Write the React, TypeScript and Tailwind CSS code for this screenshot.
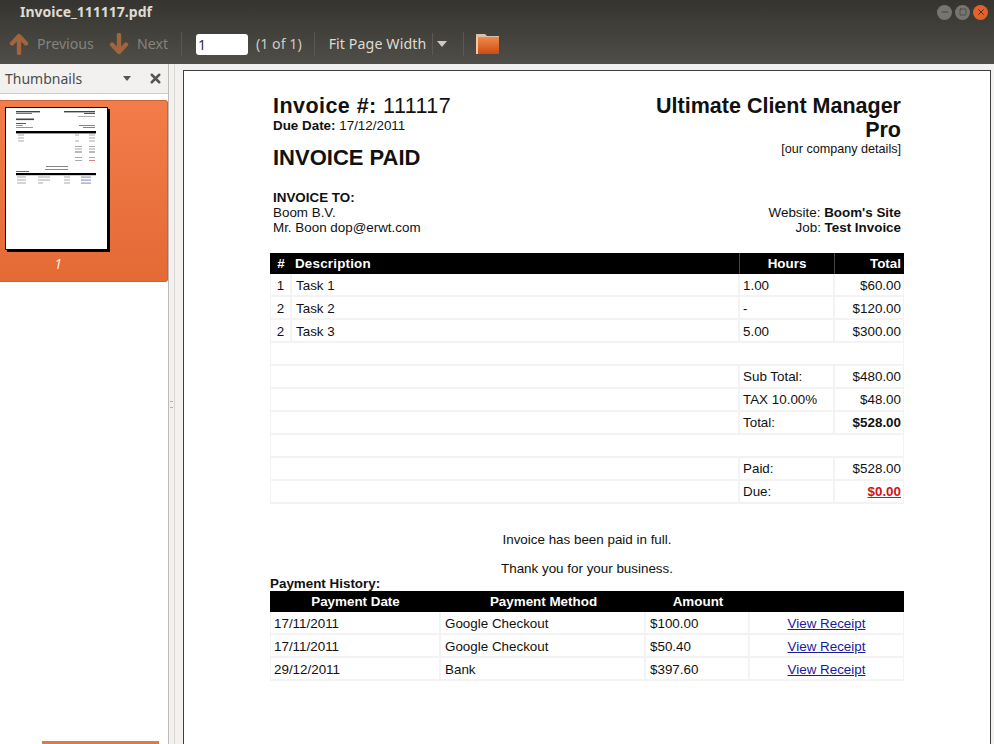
import * as React from 'react'
import { X, Minus, Square } from 'lucide-react'

type Row = { no?: string; desc?: string; mid?: string; total?: string; bold?: boolean; due?: boolean; blank?: boolean; merged?: boolean }

const rows: Row[] = [
  { no: '1', desc: 'Task 1', mid: '1.00', total: '$60.00' },
  { no: '2', desc: 'Task 2', mid: '-', total: '$120.00' },
  { no: '2', desc: 'Task 3', mid: '5.00', total: '$300.00' },
  { blank: true },
  { merged: true, mid: 'Sub Total:', total: '$480.00' },
  { merged: true, mid: 'TAX 10.00%', total: '$48.00' },
  { merged: true, mid: 'Total:', total: '$528.00', bold: true },
  { blank: true },
  { merged: true, mid: 'Paid:', total: '$528.00' },
  { merged: true, mid: 'Due:', total: '$0.00', due: true },
]

const payments = [
  ['17/11/2011', 'Google Checkout', '$100.00'],
  ['17/11/2011', 'Google Checkout', '$50.40'],
  ['29/12/2011', 'Bank', '$397.60'],
]

function Thumb() {
  // tiny picture of the page, same layout as the big one
  const lines = [
    [11, 4, 24, 1.4, '#444'], [59, 4, 31, 1.4, '#444'], [11, 6, 16, 1, '#777'], [79, 6, 11, 1, '#555'], [73, 9, 17, 0.8, '#999'],
    [11, 11.5, 18, 1.6, '#444'], [11, 16, 10, 1, '#555'], [11, 18, 7, 0.9, '#888'], [11, 20, 17, 0.9, '#888'],
    [74, 18, 16, 0.9, '#777'], [78, 20, 12, 0.9, '#777'],
  ] as const
  return (
    <svg width="103" height="143" viewBox="0 0 103 143" className="block">
      <rect x="0.5" y="0.5" width="102" height="142" fill="#fff" stroke="#000" />
      {lines.map((l, i) => (
        <rect key={i} x={l[0]} y={l[1]} width={l[2]} height={l[3]} fill={l[4]} />
      ))}
      <rect x="11" y="24" width="80" height="2.4" fill="#000" />
      {[27.5, 30.5, 33.5].map((y, i) => (
        <g key={y} fill="#aaa">
          <rect x="13" y={y} width="6" height="1" />
          {i !== 1 && <rect x="70" y={y} width="4" height="1" />}
          <rect x="84" y={y} width="6" height="1" />
        </g>
      ))}
      {[39, 41.5, 44.5, 50, 53].map((y, i) => (
        <g key={y} fill={i === 2 ? '#777' : '#aaa'}>
          <rect x="70" y={y} width="7" height="1" />
          <rect x="84" y={y} width="6" height="1" />
        </g>
      ))}
      <rect x="84" y="53" width="6" height="1" fill="#e08080" />
      <rect x="41" y="59" width="22" height="1" fill="#888" />
      <rect x="40" y="62" width="23" height="1" fill="#888" />
      <rect x="11" y="64" width="13" height="1" fill="#666" />
      <rect x="11" y="66" width="80" height="2.2" fill="#000" />
      {[69.5, 72.5, 75.5].map((y, i) => (
        <g key={y}>
          <rect x="12" y={y} width="9" height="1" fill="#aaa" />
          <rect x="33" y={y} width={i === 2 ? 5 : 12} height="1" fill="#aaa" />
          <rect x="59" y={y} width="6" height="1" fill="#aaa" />
          <rect x="76" y={y} width="10" height="1.2" fill="#99c" />
        </g>
      ))}
    </svg>
  )
}

function NavArrow({ down }: { down?: boolean }) {
  return (
    <svg width="20" height="22" viewBox="0 0 20 22" className={down ? 'rotate-180' : ''}>
      <path d="M10 20V4M3 10.5 10 3l7 7.5" fill="none" stroke="#a0653e" strokeWidth="4.4" strokeLinecap="round" strokeLinejoin="round" />
    </svg>
  )
}

export default function App() {
  return (
    <div className="h-[744px] w-[994px] overflow-hidden flex flex-col bg-[#f2f1f0] font-['Noto_Sans',sans-serif]">
      <div className="h-[24px] shrink-0 flex items-center justify-between pl-[20px] pr-[6px] bg-gradient-to-b from-[#353430] to-[#3f3e39]">
        <span className="text-[14px] font-bold text-[#dfdbd2] leading-none">Invoice_111117.pdf</span>
        <div className="flex items-center gap-[3px]">
          <span className="w-[15px] h-[15px] rounded-full bg-[#77756f] flex items-center justify-center text-[#3c3b37]">
            <Minus size={10} strokeWidth={2} />
          </span>
          <span className="w-[15px] h-[15px] rounded-full bg-[#77756f] flex items-center justify-center text-[#3c3b37]">
            <Square size={8} strokeWidth={2} />
          </span>
          <span className="w-[15px] h-[15px] rounded-full bg-[#e2622b] flex items-center justify-center text-[#3c2010]">
            <X size={10} strokeWidth={2} />
          </span>
        </div>
      </div>

      <div className="h-[40px] shrink-0 flex items-center bg-gradient-to-b from-[#3e3d38] to-[#504e48] text-[14.2px]">
        <div className="ml-[9px]"><NavArrow /></div>
        <span className="ml-[8px] text-[#85837c]">Previous</span>
        <div className="ml-[15px]"><NavArrow down /></div>
        <span className="ml-[8px] text-[#85837c]">Next</span>
        <span className="ml-[13px] w-px h-[24px] bg-[#5b5952]" />
        <span className="ml-[14px] w-[52px] h-[21px] bg-white rounded-[3px] text-[#333] pl-[2px] leading-[21px]">1</span>
        <span className="ml-[8px] text-[#cfcbc2]">(1 of 1)</span>
        <span className="ml-[12px] w-px h-[24px] bg-[#5b5952]" />
        <span className="ml-[14px] text-[#dfdbd2] tracking-[0.1px]">Fit Page Width</span>
        <span className="ml-[6px] w-px h-[22px] bg-[#5b5952]" />
        <span className="ml-[4px] w-0 h-0 border-x-[5px] border-x-transparent border-t-[6px] border-t-[#cfcbc2]" />
        <span className="ml-[16px] w-px h-[24px] bg-[#5b5952]" />
        <svg width="25" height="22" viewBox="0 0 25 22" className="ml-[11px]">
          <defs>
            <linearGradient id="folder" x1="0" y1="0" x2="0" y2="1">
              <stop offset="0" stopColor="#ee8a4a" />
              <stop offset="1" stopColor="#cf4a14" />
            </linearGradient>
          </defs>
          <path d="M1 1h9l2 2h12v3H1z" fill="#d9c3a8" />
          <rect x="1" y="4" width="23" height="17" fill="url(#folder)" />
          <rect x="1" y="4" width="2" height="17" fill="#f3c9a2" />
        </svg>
      </div>

      <div className="flex-1 min-h-0 flex">
        <div className="w-[169px] shrink-0 flex flex-col border-r border-[#bdbbb6]">
          <div className="h-[30px] shrink-0 flex items-center pl-[5px] text-[14px] text-[#4c4c4c] border-b border-[#cfcdc9]">
            <span>Thumbnails</span>
            <span className="ml-[41px] w-0 h-0 border-x-[4px] border-x-transparent border-t-[5px] border-t-[#555]" />
            <X size={15} strokeWidth={4} className="ml-[17px] text-[#555]" />
          </div>
          <div className="flex-1 bg-white pt-[6px]">
            <div className="w-[168px] h-[182px] rounded-r-[3px] bg-gradient-to-b from-[#f27c4a] to-[#e46a35] border-y border-r border-[#c9633a] pt-[6px] pl-[5px]">
              <div className="w-[103px] shadow-[2px_2px_0_#000]">
                <Thumb />
              </div>
              <div className="mt-[5px] w-[106px] text-center text-[14px] italic text-[#fbe6da] leading-[18px]">1</div>
            </div>
            <div className="mt-[459px] ml-[42px] w-[117px] h-[10px] bg-[#e2774b]" />
          </div>
        </div>

        <div className="w-[14px] shrink-0 flex">
          <div className="w-[6px] border-r border-[#d8d6d2] flex items-center justify-center">
            <div className="w-[3px] h-[7px] border-y border-[#b5b3ae]" />
          </div>
        </div>

        <div className="flex-1 min-w-0 pt-[6px]">
          <div className="h-[700px] bg-white border-l border-t border-r border-[#3f3f3f] mr-[3px] pl-[86px] pr-[2px] pt-[23px] font-['Liberation_Sans',Arial,sans-serif] text-[13.4px] leading-[15px] text-[#111]">
            <div className="w-[634px]">
              <div className="flex justify-between pl-[3px] pr-[3px]">
                <div>
                  <div className="text-[21.5px] leading-[24px] tracking-[0.45px]"><b>Invoice #:</b> 111117</div>
                  <div className="leading-[15px]"><b>Due Date:</b> 17/12/2011</div>
                  <div className="mt-[13px] text-[22px] leading-[24px] font-bold">INVOICE PAID</div>
                </div>
                <div className="text-right">
                  <div className="text-[21.5px] leading-[24px] font-bold w-[260px]">Ultimate Client Manager Pro</div>
                  <div className="leading-[15px] text-[12.6px]">[our company details]</div>
                </div>
              </div>
              <div className="mt-[20px] flex justify-between items-end pl-[3px] pr-[3px]">
                <div>
                  <div className="font-bold">INVOICE TO:</div>
                  <div>Boom B.V.</div>
                  <div>Mr. Boon dop@erwt.com</div>
                </div>
                <div className="text-right">
                  <div>Website: <b>Boom's Site</b></div>
                  <div>Job: <b>Test Invoice</b></div>
                </div>
              </div>

              <div className="mt-[18px] h-[21px] flex bg-black text-white font-bold leading-[21px]">
                <div className="w-[22px] text-center">#</div>
                <div className="w-[448px] pl-[3px] tracking-[0.2px] border-r border-[#444]">Description</div>
                <div className="w-[95px] text-center border-r border-[#444]">Hours</div>
                <div className="flex-1 text-right pr-[3px]">Total</div>
              </div>
              {rows.map((r, i) =>
                r.blank ? (
                  <div key={i} className="h-[23px] border-b-2 border-x border-[#f3f3f3]" />
                ) : (
                  <div key={i} className={`h-[23px] flex border-b-2 border-[#f3f3f3] ${r.merged ? 'leading-[21px]' : 'leading-[23px]'}`}>
                    {r.merged ? (
                      <div className="w-[470px] border-r-2 border-l border-[#f3f3f3]" />
                    ) : (
                      <>
                        <div className="w-[22px] text-center border-r-2 border-l border-[#f3f3f3]">{r.no}</div>
                        <div className="w-[448px] pl-[4px] border-r-2 border-[#f3f3f3]">{r.desc}</div>
                      </>
                    )}
                    <div className="w-[95px] pl-[3px] border-r-2 border-[#f3f3f3]">{r.mid}</div>
                    <div className={`flex-1 text-right pr-[2px] border-r border-[#f3f3f3] ${r.bold || r.due ? 'font-bold' : ''} ${r.due ? 'text-[#d0111b] underline' : ''}`}>{r.total}</div>
                  </div>
                ),
              )}

              <div className="mt-[28px] text-center leading-[15px]">Invoice has been paid in full.</div>
              <div className="mt-[14px] text-center leading-[15px]">Thank you for your business.</div>
              <div className="mt-[1px] font-bold leading-[14px]">Payment History:</div>
              <div className="h-[21px] flex bg-black text-white font-bold leading-[21px]">
                <div className="w-[171px] text-center">Payment Date</div>
                <div className="w-[205px] text-center">Payment Method</div>
                <div className="w-[104px] text-center">Amount</div>
                <div className="flex-1" />
              </div>
              {payments.map((p, i) => (
                <div key={i} className="h-[23px] flex border-b-2 border-[#f3f3f3] leading-[23px]">
                  <div className="w-[171px] pl-[3px] border-r-2 border-l border-[#f3f3f3]">{p[0]}</div>
                  <div className="w-[205px] pl-[4px] border-r-2 border-[#f3f3f3]">{p[1]}</div>
                  <div className="w-[104px] pl-[4px] border-r-2 border-[#f3f3f3]">{p[2]}</div>
                  <div className="flex-1 text-center text-[#1a1a9c] underline border-r border-[#f3f3f3]">View Receipt</div>
                </div>
              ))}
            </div>
          </div>
        </div>
      </div>
    </div>
  )
}
